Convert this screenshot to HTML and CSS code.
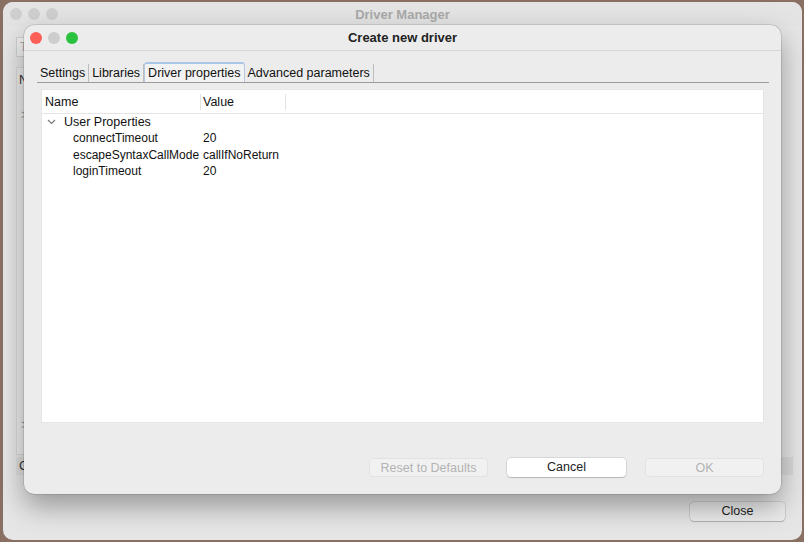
FILE: index.html
```html
<!doctype html>
<html>
<head>
<meta charset="utf-8">
<title>Create new driver</title>
<link rel="stylesheet" href="styles.css">
</head>

<body>
<div class="mgr">
	<div class="mgr_title">
		<span class="light"></span><span class="light"></span><span class="light"></span>
		<div class="mgr_name">Driver Manager</div>
	</div>
	<div class="mgr_body">
		<div class="mgr_search">T</div>
		<div class="mgr_tree">
			<div class="mgr_head">N</div>
			<div class="mgr_mark">&gt;</div>
			<div class="mgr_mark mgr_mark_low">&gt;</div>
		</div>
		<div class="mgr_row">
			<span class="mgr_g">G</span>
			<span class="mgr_field"></span>
		</div>
		<div class="mgr_foot">
			<span class="btn btn_close">Close</span>
		</div>
	</div>
</div>

<div class="dlg">
	<div class="dlg_title">
		<span class="light red"></span><span class="light grey"></span><span class="light green"></span>
		<div class="dlg_name">Create new driver</div>
	</div>
	<div class="dlg_body">
		<ul class="tabs">
			<li>Settings</li>
			<li>Libraries</li>
			<li class="on">Driver properties</li>
			<li>Advanced parameters</li>
		</ul>
		<div class="table">
			<div class="thead">
				<span class="col_name">Name</span>
				<span class="col_value">Value</span>
			</div>
			<div class="tbody">
				<div class="group">
					<svg class="chev" width="9" height="6" viewBox="0 0 9 6"><path d="M1 1 L4.5 4.5 L8 1" fill="none" stroke="#777" stroke-width="1.1"/></svg>
					User Properties
				</div>
				<div class="prop"><span class="col_name">connectTimeout</span><span class="col_value">20</span></div>
				<div class="prop"><span class="col_name">escapeSyntaxCallMode</span><span class="col_value">callIfNoReturn</span></div>
				<div class="prop"><span class="col_name">loginTimeout</span><span class="col_value">20</span></div>
			</div>
		</div>
		<div class="buttons">
			<span class="btn btn_off">Reset to Defaults</span>
			<span class="btn btn_main">Cancel</span>
			<span class="btn btn_off">OK</span>
		</div>
	</div>
</div>
</body>
</html>
```

FILE: styles.css
```css
*{ padding:0; margin:0; box-sizing:border-box;}
ul{ list-style:none;}
body{ background-color:#8a7063; width:804px; height:542px; padding:2px 2px 2px 3px; font-family:"Liberation Sans", Arial, sans-serif; font-size:12.5px; color:#111; overflow:hidden;}

.mgr{ width:799px; height:538px; background-color:#e6e6e6; border-radius:10px; display:flex; flex-direction:column; overflow:hidden;}
.mgr_title{ height:24px; display:flex; align-items:center; padding-left:7px; gap:6px; position:relative; background-color:#e4e4e4;}
.mgr_name{ position:absolute; left:0; right:0; top:5px; text-align:center; font-weight:bold; font-size:13px; color:#a9a9a9;}
.light{ display:inline-block; width:12px; height:12px; border-radius:50%; background-color:#cfcfcf;}
.mgr_body{ flex:1; display:flex; flex-direction:column; padding:11px 13px 0 13px;}
.mgr_search{ height:20px; width:200px; border:1px solid #d0d0d0; background-color:#f0f0f0; color:#aaa; padding:2px 3px; font-size:12px;}
.mgr_tree{ margin-top:10px; height:388px; width:300px; background-color:#ececec; border:1px solid #d8d8d8; padding:2px 2px;}
.mgr_head{ height:20px; line-height:20px; color:#333;}
.mgr_mark{ color:#999; margin-top:18px; padding-left:2px;}
.mgr_mark_low{ margin-top:296px;}
.mgr_row{ display:flex; justify-content:space-between; margin-top:2px; height:18px;}
.mgr_g{ background-color:#dedede; padding:1px 3px; line-height:16px; color:#333;}
.mgr_field{ width:20px; background-color:#dadada; margin-right:-4px;}
.mgr_foot{ display:flex; justify-content:flex-end; margin-top:27px; padding-right:4px;}

.dlg{ position:absolute; left:24px; top:25px; width:757px; height:469px; background-color:#ececec; border-radius:10px; box-shadow:0 12px 28px rgba(0,0,0,0.35), 0 0 0 0.5px rgba(0,0,0,0.2); display:flex; flex-direction:column;}
.dlg_title{ height:26px; border-bottom:1px solid #d6d6d6; display:flex; align-items:center; padding-left:6px; gap:6px; position:relative;}
.dlg_name{ position:absolute; left:0; right:0; top:5px; text-align:center; font-weight:bold; font-size:13px; color:#222;}
.red{ background-color:#fe5f57;}
.grey{ background-color:#cdcdcd;}
.green{ background-color:#29c33f;}
.dlg_body{ flex:1; display:flex; flex-direction:column; padding:13px 12px 0 13px;}

.tabs{ display:flex; height:19px; border-bottom:1px solid #9c9c9c; align-items:flex-end;}
.tabs li{ height:18px; line-height:19px; padding:0 3px; border-right:1px solid #bdbdbd; font-size:12.5px;}
.tabs li.on{ border:1px solid #b4c9e0; border-top:2px solid #a9c6e6; border-bottom:0; border-radius:3px 3px 0 0; background-color:#f2f2f2; height:20px; line-height:18px;}

.table{ margin:6px 5px 0 4px; height:334px; background-color:#fff; border:1px solid #e6e6e6;}
.thead{ height:24px; border-bottom:1px solid #e4e4e4; display:flex; align-items:center;}
.thead .col_name{ width:159px; padding-left:3px; border-right:1px solid #e2e2e2; line-height:16px;}
.thead .col_value{ width:85px; padding-left:2px; border-right:1px solid #e2e2e2; line-height:16px;}
.group{ height:16px; line-height:16px; padding-left:5px; display:flex; align-items:center; gap:8px;}
.prop{ height:16.5px; line-height:16.5px; display:flex; font-size:12px;}
.prop .col_name{ width:160px; padding-left:31px; white-space:nowrap;}
.prop .col_value{ padding-left:1px;}

.buttons{ display:flex; justify-content:flex-end; gap:19px; margin-top:35px; padding-right:5px;}
.btn{ display:inline-block; width:119px; height:19px; line-height:18px; text-align:center; border-radius:4px; font-size:12.5px;}
.btn_off{ background-color:#f1f1f1; border:1px solid #e2e2e2; color:#b3b3b3;}
.btn_main{ background-color:#fff; color:#222; box-shadow:0 0 0 0.5px rgba(0,0,0,0.18), 0 1px 1px rgba(0,0,0,0.15);}
.btn_close{ width:95px; background-color:#ececec; color:#222; box-shadow:0 0 0 0.5px rgba(0,0,0,0.2), 0 1px 1px rgba(0,0,0,0.15);}
```
